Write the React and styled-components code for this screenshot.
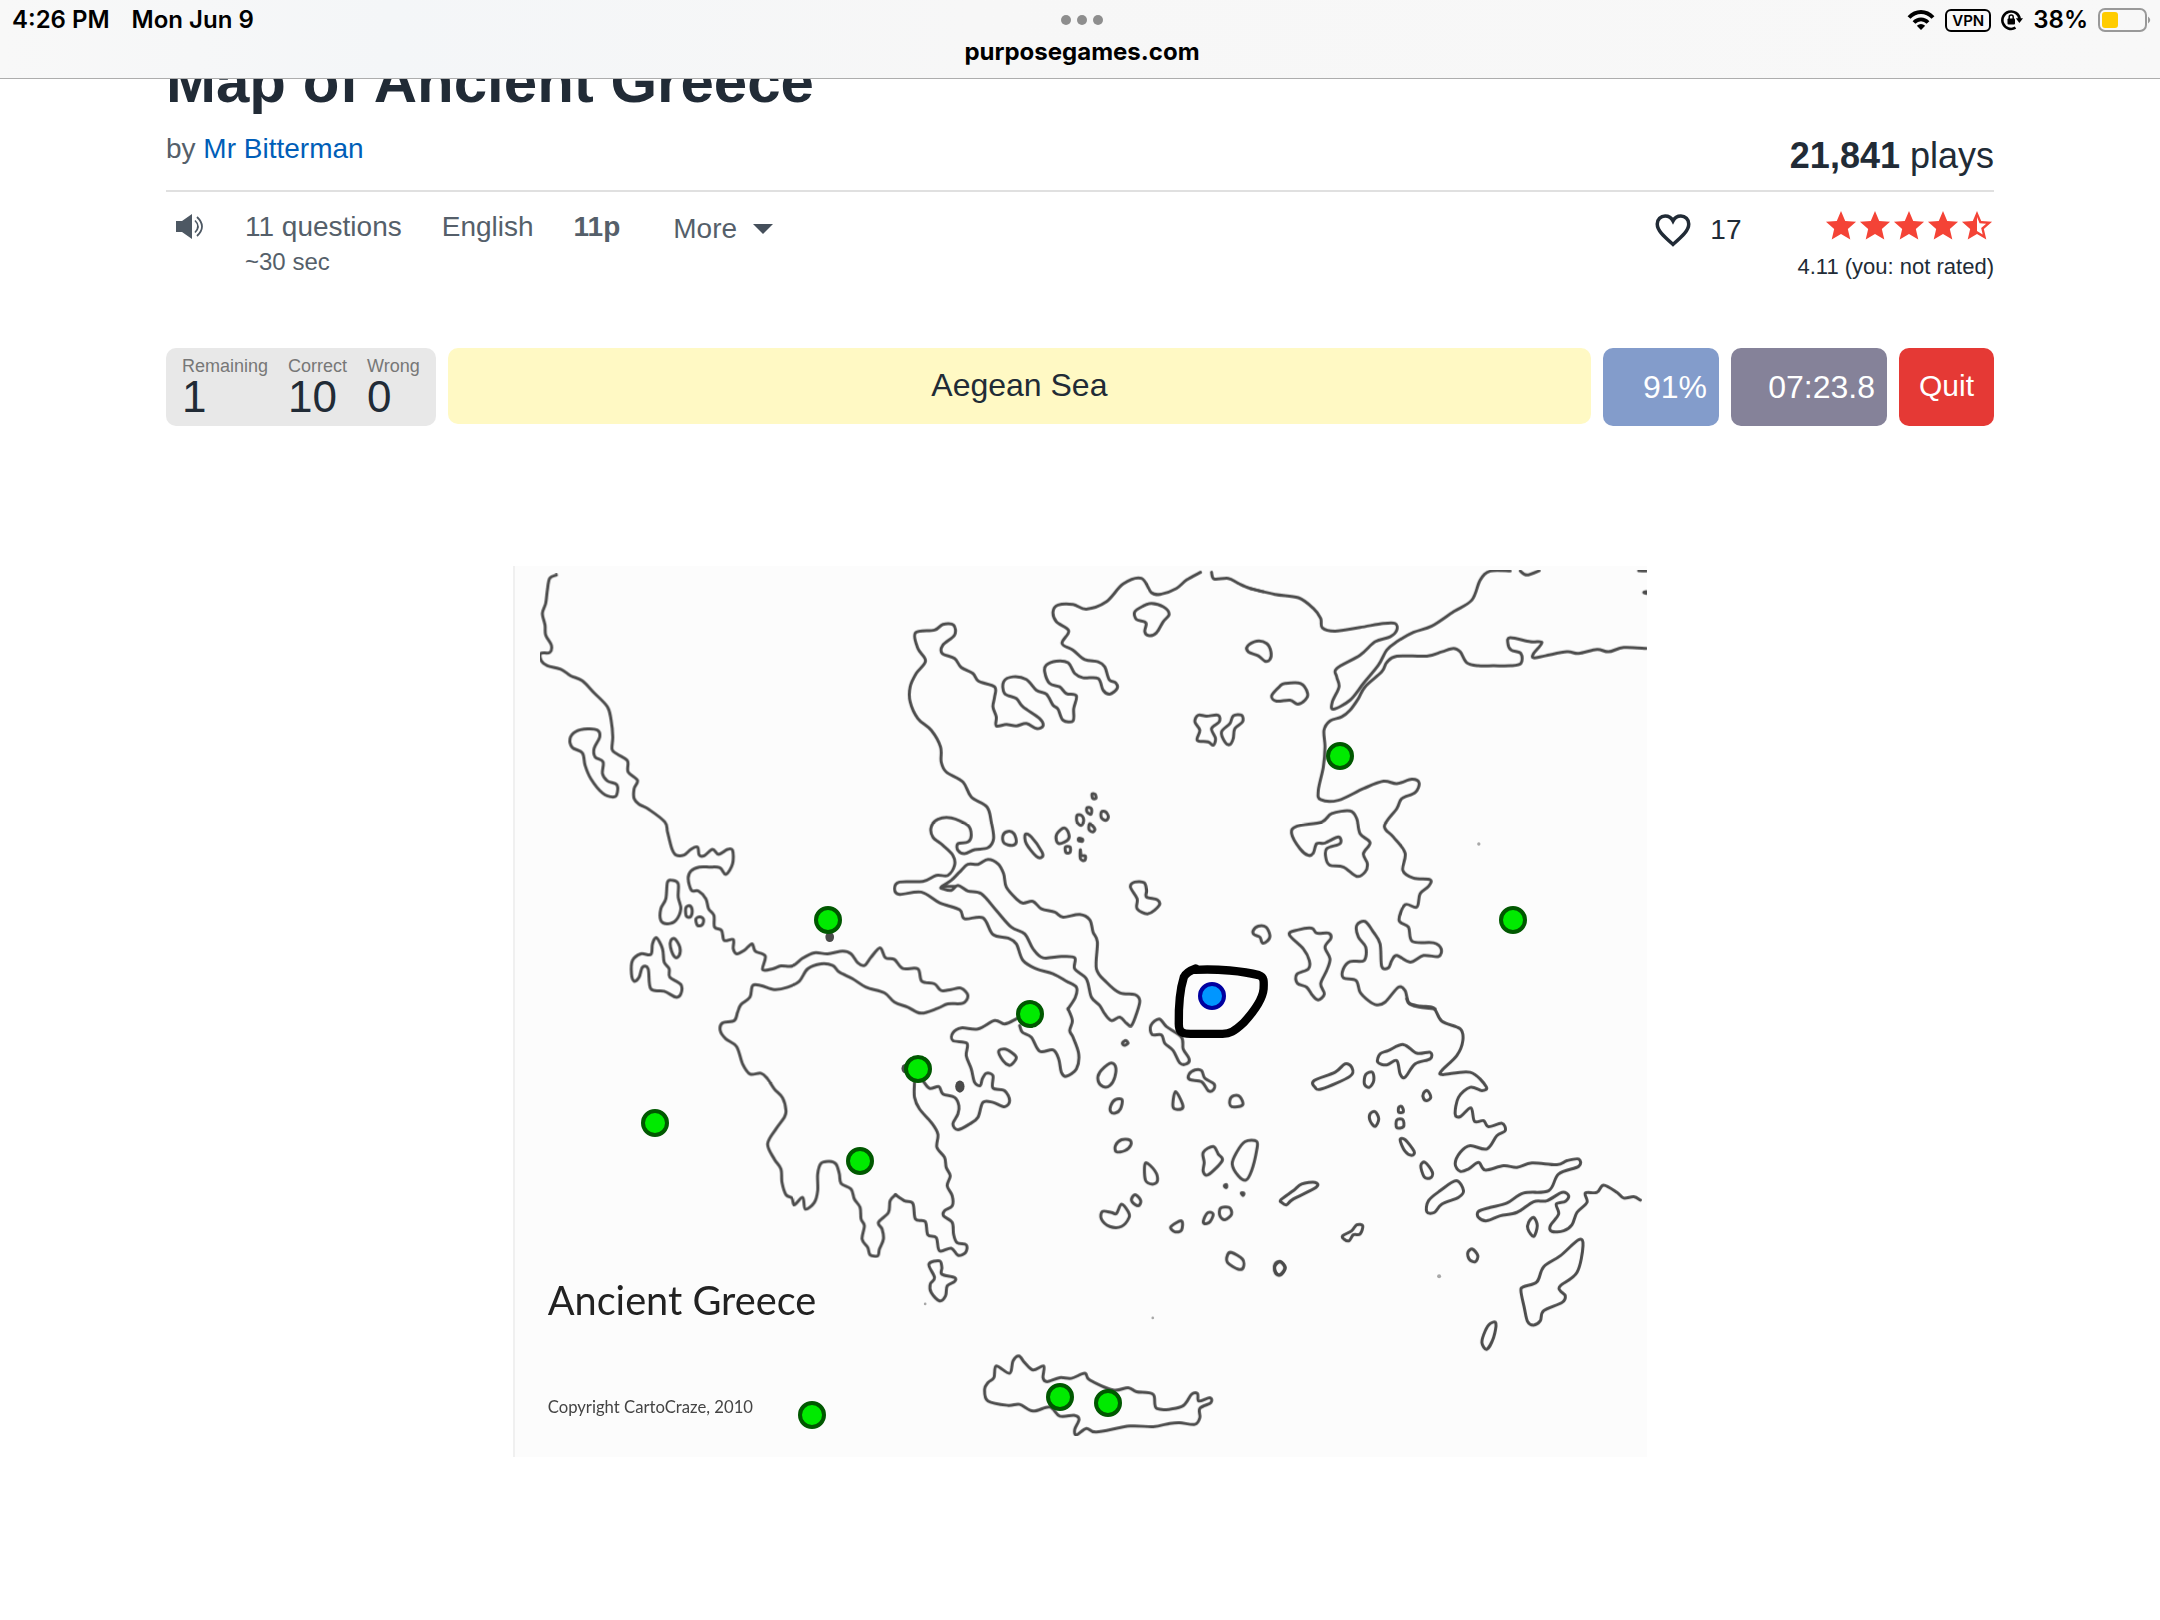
import styled, { createGlobalStyle } from "styled-components";

const GlobalStyle = createGlobalStyle`
  * {
    box-sizing: border-box;
  }

  body {
    margin: 0;
    background: #ffffff;
    color: #212b36;
    font-family: "Liberation Sans", Arial, sans-serif;
  }

  button {
    border: 0;
    padding: 0;
    background: none;
    font: inherit;
    color: inherit;
    cursor: pointer;
  }
`;

const BrowserBar = styled.header`
  position: sticky;
  top: 0;
  z-index: 2;
  padding: 4px 8px 0 12px;
  height: 79px;
  border-bottom: 1px solid #adadad;
  background: linear-gradient(90deg, #f8f8f8, #f4f6f8 18%, #f7f7f7 45%, #f8f8f8);
  color: #000000;
  font-family: Inter, sans-serif;
  font-size: 24px;
  font-weight: 600;
  line-height: 32px;
`;

const StatusRow = styled.div`
  display: grid;
  grid-template-columns: 1fr auto 1fr;
  align-items: center;
`;

const StatusGroup = styled.div`
  display: flex;
  align-items: center;
  justify-content: ${(props) => (props.$end ? "flex-end" : "flex-start")};
  gap: ${(props) => (props.$end ? "10px" : "22px")};

  svg {
    display: block;
  }
`;

const Dots = styled.div`
  display: flex;
  gap: 6px;

  i {
    width: 10px;
    height: 10px;
    border-radius: 50%;
    background: #8e8e8e;
  }
`;

const VpnBadge = styled.span`
  border: 2px solid #000000;
  border-radius: 6px;
  padding: 0 5px;
  font-size: 15px;
  line-height: 19px;
`;

const Address = styled.div`
  font-weight: 700;
  text-align: center;
`;

const Page = styled.main`
  padding: 0 166px 160px;
`;

const Heading = styled.div`
  display: flex;
  align-items: flex-end;
  justify-content: space-between;
  margin-top: -27px;
  padding-bottom: 12px;
  border-bottom: 2px solid #e0e0e0;
`;

const Title = styled.h1`
  margin: 0 0 19px;
  font-size: 60px;
  line-height: 60px;
`;

const Author = styled.p`
  margin: 0 0 11px;
  color: #555f6a;
  font-size: 28px;
  line-height: 36px;

  a {
    color: #005eb8;
    text-decoration: none;
  }
`;

const Plays = styled.p`
  margin: 0;
  font-size: 36px;
  line-height: 44px;
`;

const Meta = styled.div`
  display: flex;
  align-items: flex-start;
  justify-content: space-between;
  padding-top: 17px;
  font-size: 28px;
  line-height: 36px;
`;

const MetaGroup = styled.div`
  display: flex;
  align-items: flex-start;
  gap: ${(props) => props.$gap};
  color: ${(props) => props.$color};
`;

const SoundButton = styled.button`
  margin-left: 9px;
  height: 36px;

  svg {
    display: block;
  }
`;

const Duration = styled.div`
  font-size: 24px;
  line-height: 34px;
`;

const MoreButton = styled.button`
  display: flex;
  align-items: center;
  gap: 16px;
  padding: 2px 0 0 13px;

  &::after {
    content: "";
    border: 10px solid transparent;
    border-top-color: #454f5b;
    border-bottom: 0;
  }
`;

const LikeButton = styled.button`
  display: flex;
  align-items: center;
  gap: 16px;
`;

const Rating = styled.div`
  text-align: right;
  font-size: 22px;
  line-height: 28px;
`;

const Stars = styled.div`
  display: flex;
  justify-content: flex-end;
  margin-bottom: 10px;
  color: #f44336;
`;

const QuizBar = styled.section`
  display: flex;
  align-items: flex-start;
  gap: 12px;
  margin-top: 67px;
  font-size: 32px;
`;

const Score = styled.dl`
  display: flex;
  gap: 20px;
  margin: 0;
  height: 78px;
  padding: 8px 16px;
  border-radius: 10px;
  background: #e8e8e8;

  dt {
    color: #777777;
    font-size: 18px;
    line-height: 20px;
  }

  dd {
    margin: 0;
    font-size: 44px;
    line-height: 42px;
  }
`;

const Prompt = styled.div`
  flex: 1;
  height: 76px;
  border-radius: 10px;
  background: #fff9c4;
  line-height: 74px;
  text-align: center;
`;

const Counter = styled.div`
  width: ${(props) => props.$width};
  height: 78px;
  padding-right: 12px;
  border-radius: 10px;
  background: ${(props) => props.$background};
  color: #ffffff;
  line-height: 78px;
  text-align: right;
`;

const QuitButton = styled.button`
  width: 95px;
  height: 78px;
  padding-bottom: 2px;
  border-radius: 10px;
  background: #e53935;
  color: #ffffff;
  font-size: 30px;
`;

const Board = styled.section`
  position: relative;
  width: 62%;
  margin: 140px auto 0;
  background: #fcfcfc;

  > svg {
    display: block;
    width: 100%;
    height: auto;
  }
`;

const Pin = styled.button`
  position: absolute;
  left: ${(props) => (props.$x / 3396) * 100}%;
  top: ${(props) => (props.$y / 2670) * 100}%;
  width: 28px;
  height: 28px;
  margin: -14px 0 0 -14px;
  border: 4px solid ${(props) => (props.$current ? "#0000a0" : "#005800")};
  border-radius: 50%;
  background: ${(props) => (props.$current ? "#0096ff" : "#00ea00")};
`;

const pins = [
  [942, 1062],
  [2478, 570],
  [2994, 1062],
  [1548, 1343],
  [1212, 1506],
  [426, 1668],
  [1038, 1782],
  [894, 2544],
  [1638, 2490],
  [1782, 2508],
];

// Each sheet is one part of the map with its own origin. Lines are flat "x y" lists.
const sheets = [
  {
    x: -12,
    y: -18,
    open: [
      "142 45 122 55 115 90 110 130 100 160 108 195 110 225 127 255 122 277 95 280 97 302 115 317 155 327 185 347 220 362 255 398 295 440 306 480 311 530 309 568 325 582 355 602 357 635 385 660 375 685 375 715 390 732 420 748 467 785 475 815 488 865 500 884 525 884 545 867 565 860 570 884 585 886 610 867 628 882 655 867 670 870 670 910 650 942 632 922 600 920 570 920 545 932 537 955 547 990 568 992 590 1015 598 1045 614 1065 616 1100 637 1110 645 1140 672 1137 672 1165 682 1180 705 1170 728 1150 738 1172 768 1187 760 1227 790 1225 815 1216 850 1216 880 1193 915 1177 955 1180 1000 1172 1025 1180 1045 1207 1065 1215 1085 1190 1112 1162 1128 1192 1155 1197 1180 1224 1225 1225 1237 1262 1275 1270 1295 1290 1325 1287 1355 1283 1375 1305 1360 1328 1315 1330 1285 1343 1235 1358 1195 1340 1155 1325 1125 1297 1070 1280 1030 1255 990 1235 970 1215 935 1210 895 1225 870 1262 835 1280 795 1287 755 1275 730 1275 722 1310 695 1332 685 1355 675 1380 640 1387 633 1410 650 1435 682 1458 700 1510 722 1540 755 1538 775 1555 795 1585 820 1612 830 1650 825 1670 800 1705 775 1750 795 1795 815 1825 818 1865 830 1902 848 1912 855 1932 880 1910 888 1945 915 1925 925 1890 925 1840 935 1808 960 1802 980 1810 990 1840 995 1868 1025 1885 1035 1915 1052 1940 1055 1975 1065 1995 1058 2035 1075 2060 1082 2082 1105 2085 1110 2065 1122 2035 1118 2005 1107 1985 1137 1955 1142 1920 1158 1902",
    ],
    closed: [
      "200 514 235 506 265 510 272 530 255 565 258 590 282 605 280 640 295 662 322 672 325 695 315 710 280 698 245 655 228 615 220 578 190 562 183 535",
      "475 965 490 960 507 970 507 1010 515 1045 500 1080 475 1090 455 1080 455 1045 470 1015",
      "531 1040 542 1036 549 1050 544 1069 532 1068 529 1052",
      "560 1076 572 1069 583 1077 579 1093 565 1095",
      "485 1140 497 1135 512 1160 510 1185 497 1190 484 1160",
      "442 1132 460 1165 465 1205 480 1225 482 1250 515 1272 515 1300 500 1310 465 1292 425 1285 417 1225 400 1220 390 1250 375 1262 367 1240 370 1200 395 1180 425 1182 430 1150",
    ],
  },
  {
    x: 1098,
    y: -18,
    open: [
      "565 1345 587 1310 590 1280 560 1262 520 1240 470 1225 430 1200 410 1150 385 1133 340 1122 310 1072 255 1075 240 1048 180 1027 125 995 60 1002 45 985 60 965 130 963 170 945 205 945 225 915 220 885 190 855 160 830 155 800 175 777 215 773 265 795 275 825 265 845 235 850 235 870 255 880 285 868 325 862 342 835 335 785 322 740 275 710 250 665 200 635 185 605 183 560 155 510 115 475 92 425 92 380 110 340 138 302 115 265 108 218 165 210 190 193 222 195 225 225 190 255 188 280 225 295 245 322 280 340 297 363 345 380 345 410 340 440 350 470 350 497 380 493 410 497 440 490 470 505 490 497 480 475 430 440 410 415 375 400 372 365 400 350 440 358 470 390 500 402 520 435 535 447 550 480 580 482 582 445 590 407 560 400 540 380 510 370 495 335 500 315 530 303 565 308 585 340 610 353 655 355 670 390 690 402 712 385 708 368 688 358 675 320 655 305 615 298 580 270 547 250 567 212 530 185 520 155 535 135 580 133 620 147 680 125 730 72 785 55 815 98 845 102 890 85 920 60 962 37",
      "995 37 1003 57 1045 55 1075 70 1110 85 1150 95",
      "190 978 225 978",
    ],
    closed: [
      "185 980 215 960 240 935 265 912 295 912 325 897 355 910 372 940 380 980 410 1015 430 1028 460 1023 485 1045 525 1055 550 1070 600 1062 630 1078 640 1115 653 1145 650 1225 680 1265 720 1297 765 1302 780 1320 770 1360 755 1395 740 1388 720 1370 695 1380 675 1360 660 1335 635 1310 620 1255 585 1225 585 1192 545 1188 490 1192 460 1165 435 1120 395 1100 350 1050 305 1000 265 992 235 975 215 990 190 985",
      "765 155 790 138 815 130 850 140 868 162 850 185 830 218 808 227 795 215 798 188 770 178",
      "1103 258 1130 243 1160 250 1173 275 1170 298 1155 303 1135 287 1105 275",
      "1175 407 1200 378 1215 370 1262 370 1283 400 1275 420 1253 432 1230 420 1190 423",
      "945 485 955 465 980 468 1015 465 1018 485 995 505 1007 535 1000 555 985 545 952 540 960 510",
      "1025 515 1050 490 1060 467 1085 465 1088 485 1065 505 1060 535 1050 553 1035 545",
      "370 825 385 813 403 820 410 845 398 855 373 848",
      "437 822 455 830 487 875 487 890 470 888 440 850",
      "532 820 553 803 567 820 565 838 540 850 530 840",
      "592 765 605 765 612 780 605 795 592 785",
      "622 742 635 745 634 762 622 755",
      "665 755 678 755 686 770 678 780 665 772",
      "630 790 645 805 640 815 628 808",
      "557 860 571 860 571 876 559 877",
      "602 868 605 885 617 887 615 900 602 895",
      "752 980 765 965 793 967 800 990 800 1010 832 1018 838 1035 805 1060 772 1045 772 1015",
      "1120 1110 1135 1097 1158 1100 1170 1125 1162 1142 1147 1147 1140 1130 1122 1122",
      "637 701 646 702 649 714 639 714",
      "597 834 608 836 608 843 597 841",
    ],
  },
  {
    x: 2208,
    y: -18,
    open: [
      "0 85 75 103 145 113 190 145 212 175 217 203 255 213 330 202 400 190 435 190 440 210 420 230 375 245 330 285 260 325 260 350 267 380 247 425 250 447 300 420 340 370 385 315 410 270 440 245 490 217 545 198 610 155 665 120 690 60 720 33 780 33",
      "810 33 830 45 867 32",
      "1165 32 1188 33",
      "1188 265 1120 262 1075 275 1040 268 985 280 950 275 885 287 850 293 850 280 875 247 840 245 780 233 773 250 783 270 812 280 812 310 780 317 730 317 685 317 650 308 630 275 610 265 575 275 530 288 440 288 410 307 395 335 345 380 325 415 300 450 275 470 240 482 222 510 225 560 220 620 205 690 212 718 265 720 340 685 400 663 440 670 485 657 507 668 495 697 455 715 440 745 403 797 430 830 465 878 458 930 490 953 540 958 535 978 510 1000 500 1040 465 1033 447 1080 475 1100 487 1143 550 1147 573 1165 565 1188 520 1185 480 1205 440 1185 425 1200 415 1222 395 1218 390 1150 370 1115 345 1083 320 1095 325 1130 347 1160 342 1200 300 1203 280 1225 280 1252 318 1260 330 1295 355 1320 380 1333 405 1325 445 1280 465 1290 475 1325 500 1338 555 1345",
    ],
    closed: [
      "125 820 140 798 215 785 245 760 300 752 320 775 330 820 360 847 340 880 352 910 345 935 320 948 280 920 240 915 228 895 230 865 270 850 265 830 225 848 200 850 190 878 175 885 150 865",
      "118 1122 145 1108 185 1103 200 1118 235 1118 243 1133 225 1160 240 1195 230 1230 212 1270 223 1300 205 1318 188 1305 170 1280 142 1268 140 1242 175 1225 178 1200 160 1165",
      "1180 97 1188 95 1188 100",
    ],
  },
  {
    x: 1098,
    y: 1302,
    open: [
      "48 582 75 600 100 608 108 655 137 662 145 702 170 710 180 750 215 742 235 763 258 755 260 732 232 725 222 700 218 665 192 645 195 630 218 615 218 585 203 555 212 525 200 500 195 470 172 440 175 400 155 365 120 325 105 290 105 245",
      "130 240 150 263 178 258 190 280 225 290 238 315 235 340 220 370 235 387 270 370 295 350 310 305 340 305 375 318 390 300 375 270 340 262 340 225 320 218 308 235 302 255 285 245 275 205 260 165 262 128 220 120 220 97 245 82 295 85 345 60 375 70 410 55",
      "420 75 428 95 455 110 480 152 520 148 537 175 545 215 560 227 590 205 597 160 580 110 570 90 578 60 565 25",
    ],
    closed: [
      "357 152 375 145 395 155 410 170 400 188 388 194 370 180",
      "148 790 180 780 187 800 187 820 225 830 225 842 203 855 198 885 180 900 155 875 152 850 165 830",
      "315 1165 325 1145 343 1130 350 1095 390 1117 400 1080 418 1065 435 1085 460 1107 492 1095 490 1130 502 1142 540 1130 575 1132 615 1117 630 1137 700 1167 745 1160 770 1172 820 1180 832 1223 905 1217 935 1180 953 1178 957 1200 990 1190 993 1205 960 1222 960 1250 945 1270 900 1265 870 1267 820 1277 750 1275 650 1293 620 1282 590 1302 585 1285 598 1255 585 1243 540 1245 510 1218 460 1230 420 1210 385 1213 325 1200",
      "813 75 838 55 860 78 905 110 910 145 928 175 920 190 900 187 880 150 855 128 845 103 817 102",
      "927 222 945 208 965 210 975 233 1003 250 1000 268 985 270 965 243 930 237",
      "660 215 690 188 707 197 705 230 690 255 670 258 655 240",
      "693 315 707 297 727 297 722 325 707 337 693 333",
      "887 273 908 310 905 325 880 320",
      "1050 298 1062 285 1080 288 1088 313 1055 318",
      "707 435 725 417 750 418 753 433 735 450 710 453",
      "797 487 825 510 833 540 818 550 797 538",
      "970 455 1000 437 1015 460 1027 480 985 522 970 512 973 485",
      "1057 490 1070 455 1095 423 1130 422 1130 450 1115 510 1098 538 1075 525",
      "757 590 768 582 783 600 775 615 757 603",
      "668 632 695 635 710 638 725 610 745 632 748 650 725 677 690 677 665 655",
      "873 678 905 660 905 688 885 693",
      "972 655 985 635 1000 640 990 663 973 668",
      "1022 622 1048 620 1055 640 1035 657 1020 645",
      "1043 762 1055 755 1088 775 1090 800 1075 805 1043 785",
      "1185 790 1200 782 1216 800 1200 822 1186 815",
      "728 127 738 120 745 128 733 134",
      "1034 553 1040 552 1040 560 1035 559",
      "1084 577 1092 577 1090 584",
    ],
  },
  {
    x: 2208,
    y: 1302,
    open: [
      "470 -5 478 10 510 17 550 22 575 62 630 85 638 120 620 165 575 210 578 222 660 215 708 258 695 270 660 260 625 290 615 340 630 348 662 322 673 362 700 360 715 378 755 368 765 390 740 405 710 445 660 435 630 455 615 490 630 512 655 505 685 485 705 508 760 495 800 500 845 487 920 492 950 480 985 475 985 497 925 520 895 570 820 577 770 607 720 620 685 632 685 650 710 660 750 645 800 635 850 603 890 600 935 575 955 585 945 602 918 610 925 640 900 675 905 692 940 690 965 672 980 635 1010 605 1005 577 1040 575 1060 553 1100 575 1120 592 1150 588 1170 598",
    ],
    closed: [
      "383 185 390 160 415 150 460 132 500 158 540 155 540 175 495 190 465 230 450 220 440 180 410 193",
      "192 240 255 215 285 190 305 200 300 227 215 265 195 260",
      "347 222 367 215 371 240 358 260 343 250",
      "520 278 532 270 542 290 530 300 520 293",
      "360 340 375 333 386 355 375 377 360 360",
      "446 320 455 318 460 333 446 335",
      "440 358 458 357 460 378 440 381",
      "450 418 465 417 492 452 485 464 465 452",
      "512 495 525 485 547 515 540 532 522 528",
      "618 540 640 570 625 590 575 610 553 635 530 633 535 600 570 570",
      "93 597 130 570 155 550 195 545 198 560 130 595 110 612 96 606",
      "278 705 305 690 320 672 338 675 330 700 310 702 297 720 282 715",
      "75 795 92 783 105 802 92 822 78 815",
      "653 755 667 745 683 765 675 783 657 775",
      "835 665 850 650 861 675 850 707 833 685",
      "812 870 820 858 860 843 880 798 930 765 985 717 998 735 980 815 930 855 930 870 945 885 935 905 880 930 870 960 850 973 832 962 822 920",
      "720 968 737 967 730 1010 710 1045 695 1025 705 990",
    ],
  },
];

// Catmull-Rom curve through every point of the list
const curve = (list, closed) => {
  const numbers = list.split(" ").map(Number);
  const points = [];
  for (let i = 0; i < numbers.length; i += 2) {
    points.push([numbers[i], numbers[i + 1]]);
  }

  const count = points.length;
  const at = (i) =>
    closed
      ? points[(i + count) % count]
      : points[Math.min(Math.max(i, 0), count - 1)];

  let path = `M${points[0].join(" ")}`;
  for (let i = 0; i < (closed ? count : count - 1); i++) {
    const [before, from, to, after] = [at(i - 1), at(i), at(i + 1), at(i + 2)];
    path += `C${from[0] + (to[0] - before[0]) / 6} ${from[1] + (to[1] - before[1]) / 6} `;
    path += `${to[0] - (after[0] - from[0]) / 6} ${to[1] - (after[1] - from[1]) / 6} ${to[0]} ${to[1]}`;
  }
  return closed ? `${path}Z` : path;
};

const GreeceMap = () => (
  <svg viewBox="0 0 3396 2670" role="img" aria-label="Map of Ancient Greece">
    <filter id="pencil" x="0" y="0" width="100%" height="100%">
      <feGaussianBlur stdDeviation="2" />
    </filter>
    <path d="M3 0V2670" stroke="#ededed" strokeWidth="5" />
    <g
      fill="none"
      stroke="#4c4c4c"
      strokeWidth="9"
      strokeLinecap="round"
      strokeLinejoin="round"
      filter="url(#pencil)"
    >
      {sheets.map((sheet, index) => (
        <g key={index} transform={`translate(${sheet.x} ${sheet.y})`}>
          {sheet.open.map((line) => (
            <path key={line} d={curve(line, false)} />
          ))}
          {sheet.closed.map((line) => (
            <path key={line} d={curve(line, true)} />
          ))}
        </g>
      ))}
    </g>
    <g fill="#4a4a4a">
      <ellipse cx="949" cy="1112" rx="13" ry="15" />
      <ellipse cx="1339" cy="1560" rx="14" ry="18" />
      <ellipse cx="1176" cy="1506" rx="12" ry="14" />
      <g fill="#a8a8a8">
        <circle cx="2894" cy="833" r="5" />
        <circle cx="2775" cy="2128" r="6" />
        <circle cx="1235" cy="2211" r="4" />
        <circle cx="1917" cy="2253" r="4" />
      </g>
    </g>
    <path
      d="M2043 1210C2110 1206 2190 1214 2235 1226C2252 1232 2250 1245 2249 1268C2246 1300 2220 1335 2190 1368C2160 1396 2148 1401 2126 1402H2030C2002 1402 1995 1394 1995 1372C1994 1310 1998 1270 2010 1232Q2018 1216 2046 1206"
      fill="none"
      stroke="#000000"
      strokeWidth="25"
      strokeLinecap="round"
      strokeLinejoin="round"
    />
    <g fontFamily="Lato, sans-serif" fill="#222222">
      <text x="104" y="2244" fontSize="119">
        Ancient Greece
      </text>
      <text x="104" y="2538" fontSize="50" fill="#444444">
        Copyright CartoCraze, 2010
      </text>
    </g>
  </svg>
);

const WifiIcon = () => (
  <svg width="28" height="22" viewBox="0 0 28 22" fill="none" stroke="#000000">
    <path d="M2 8.5C9 1 19 1 26 8.5" strokeWidth="4" />
    <path d="M7 13.5C11 9.3 17 9.3 21 13.5" strokeWidth="3.8" />
    <path d="M14 21L9.8 16.8Q14 13.4 18.2 16.8Z" fill="#000000" stroke="none" />
  </svg>
);

const RotationLockIcon = () => (
  <svg width="22" height="22" viewBox="0 0 22 22" fill="none" stroke="#000000">
    <path d="M14.5 18.7A8.7 8.7 0 1 1 18.7 10" strokeWidth="2.6" />
    <path d="M14.8 9.3H22L18.4 14Z" fill="#000000" stroke="none" />
    <rect x="6.5" y="9.5" width="7.5" height="6" rx="1" fill="#000000" stroke="none" />
    <path d="M8.2 10V8a2 2 0 0 1 4 0v2" strokeWidth="1.5" />
  </svg>
);

const BatteryIcon = () => (
  <svg width="54" height="24" viewBox="0 0 54 24">
    <rect x="1" y="1" width="47" height="22" rx="6" fill="none" stroke="#999999" strokeWidth="2" />
    <rect x="4" y="4" width="16" height="16" rx="3" fill="#ffcc00" />
    <path d="M50 8.5Q54.5 12 50 15.5Z" fill="#999999" />
  </svg>
);

const SoundIcon = () => (
  <svg width="30" height="36" viewBox="0 0 30 36" fill="none" stroke="#4d5863">
    <path d="M1 12H7L17 5V30L7 23H1Z" fill="#4d5863" stroke="none" />
    <path d="M20 11.5Q26 17.5 20 23.5" strokeWidth="1.6" />
    <path d="M22 8Q32 17.5 22 27" strokeWidth="1.8" />
  </svg>
);

const HeartIcon = () => (
  <svg width="42" height="42" viewBox="0 0 24 24" fill="none" stroke="currentColor">
    <path
      d="M12 20.200C6.500 15.300 3 12.200 3 8.500C3 5.900 5 4 7.500 4C9.300 4 11.100 5 12 6.800C12.900 5 14.700 4 16.500 4C19 4 21 5.900 21 8.500C21 12.200 17.500 15.300 12 20.200Z"
      strokeWidth="2"
    />
  </svg>
);

const Star = ({ half }) => (
  <svg width="34" height="34" viewBox="0.7 0.7 22.6 22.6" fill="currentColor">
    {half ? (
      <path d="M22 9.24l-7.19-.62L12 2 9.19 8.63 2 9.24l5.46 4.73L5.82 21 12 17.27 18.18 21l-1.63-7.03L22 9.24zM12 15.4V6.1l1.71 4.04 4.38.38-3.32 2.88 1 4.28L12 15.4z" />
    ) : (
      <path d="M12 17.27L18.18 21l-1.64-7.03L22 9.24l-7.19-.61L12 2 9.19 8.63 2 9.24l5.46 4.73L5.82 21z" />
    )}
  </svg>
);

const App = () => {
  return (
    <>
      <GlobalStyle />
      <BrowserBar>
        <StatusRow>
          <StatusGroup>
            <span>4:26 PM</span>
            <span>Mon Jun 9</span>
          </StatusGroup>
          <Dots>
            <i />
            <i />
            <i />
          </Dots>
          <StatusGroup $end>
            <WifiIcon />
            <VpnBadge>VPN</VpnBadge>
            <RotationLockIcon />
            <span>38%</span>
            <BatteryIcon />
          </StatusGroup>
        </StatusRow>
        <Address>purposegames.com</Address>
      </BrowserBar>

      <Page>
        <Heading>
          <div>
            <Title>Map of Ancient Greece</Title>
            <Author>
              by <a href="#author">Mr Bitterman</a>
            </Author>
          </div>
          <Plays>
            <b>21,841</b> plays
          </Plays>
        </Heading>

        <Meta>
          <MetaGroup $gap="40px" $color="#555f6a">
            <SoundButton aria-label="Sound">
              <SoundIcon />
            </SoundButton>
            <div>
              11 questions
              <Duration>~30 sec</Duration>
            </div>
            <span>English</span>
            <b>11p</b>
            <MoreButton>More</MoreButton>
          </MetaGroup>
          <MetaGroup $gap="56px" $color="#212b36">
            <LikeButton aria-label="Like">
              <HeartIcon />
              17
            </LikeButton>
            <Rating>
              <Stars>
                <Star />
                <Star />
                <Star />
                <Star />
                <Star half />
              </Stars>
              4.11 (you: not rated)
            </Rating>
          </MetaGroup>
        </Meta>

        <QuizBar>
          <Score>
            <div>
              <dt>Remaining</dt>
              <dd>1</dd>
            </div>
            <div>
              <dt>Correct</dt>
              <dd>10</dd>
            </div>
            <div>
              <dt>Wrong</dt>
              <dd>0</dd>
            </div>
          </Score>
          <Prompt>Aegean Sea</Prompt>
          <Counter $width="116px" $background="#839ccb">
            91%
          </Counter>
          <Counter $width="156px" $background="#858299">
            07:23.8
          </Counter>
          <QuitButton>Quit</QuitButton>
        </QuizBar>

        <Board>
          <GreeceMap />
          {pins.map(([x, y], index) => (
            <Pin key={index} $x={x} $y={y} aria-label={`Place ${index + 1}`} />
          ))}
          <Pin $x={2094} $y={1289} $current aria-label="Selected place" />
        </Board>
      </Page>
    </>
  );
};

export default App;
